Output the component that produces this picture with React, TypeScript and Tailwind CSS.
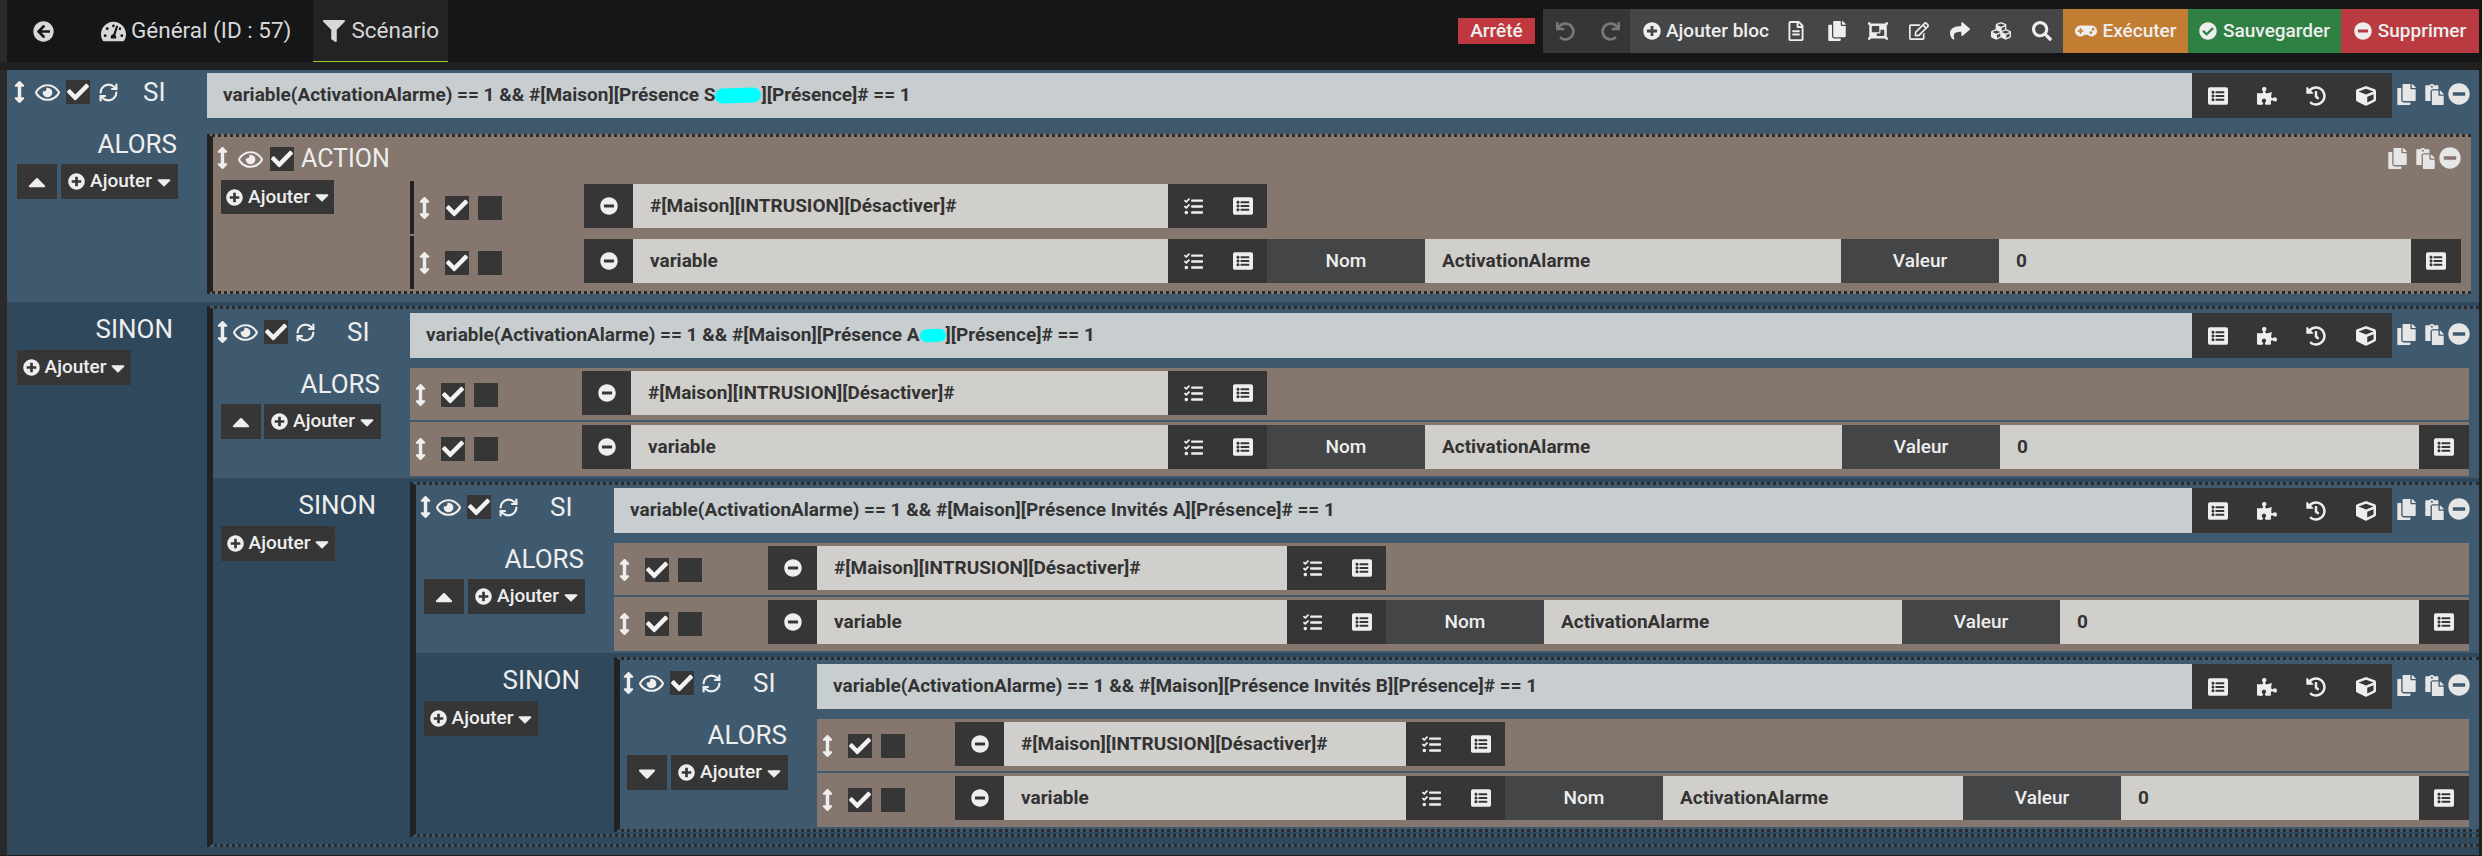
import type { ReactNode } from "react";
import { RefreshCw } from "lucide-react";
import {
  FaArrowCircleLeft, FaArrowsAltV, FaCaretDown, FaCaretUp, FaCheck, FaCheckCircle, FaCopy, FaCube, FaCubes,
  FaFilter, FaGamepad, FaHistory, FaListAlt, FaMinusCircle, FaObjectGroup, FaPaste, FaPlusCircle, FaPuzzlePiece,
  FaRedo, FaRegEdit, FaRegEye, FaRegFileAlt, FaSearch, FaShare, FaTachometerAlt, FaTasks, FaUndo,
} from "react-icons/fa";

// colonnes propres à chaque niveau d'imbrication
const LEVELS = [
  {
    frame: "border-l-[7px] border-l-[#2a2a2a]",
    left: "w-[200px]",
    head: "pl-[7px]",
    eye: "ml-[10px]",
    sync: "ml-[8px]",
    si: "ml-[24px]",
    gutter: "w-[170px]",
    cmd: "w-[535px]",
    name: "w-[416px]",
    leftPad: "pl-[10px]",
    who: "S",
    blob: "w-[46px] h-[15px]",
  },
  {
    frame: "mt-[4px] mb-[8px] border-l-[6px] border-l-[#222] border-y-[3px] border-y-[#2a2a2a] border-dotted [border-left-style:solid] pt-[4px]",
    left: "w-[197px]",
    head: "pl-[4px]",
    eye: "ml-[5px]",
    sync: "ml-[7px]",
    si: "ml-[31px]",
    gutter: "w-[172px]",
    cmd: "w-[537px]",
    name: "w-[417px]",
    leftPad: "pl-[8px]",
    who: "A",
    blob: "w-[26px] h-[13px]",
  },
  {
    frame: "mt-[4px] mb-[7px] border-l-[6px] border-l-[#222] border-y-[3px] border-y-[#2a2a2a] border-dotted [border-left-style:solid] pt-[3px]",
    left: "w-[198px]",
    head: "pl-[4px]",
    eye: "ml-[5px]",
    sync: "ml-[7px]",
    si: "ml-[31px]",
    gutter: "w-[154px]",
    cmd: "w-[470px]",
    name: "w-[358px]",
    leftPad: "pl-[8px]",
    who: "Invités A",
    blob: "",
  },
  {
    frame: "mt-[4px] mb-[2px] border-l-[6px] border-l-[#222] border-y-[3px] border-y-[#2a2a2a] border-dotted [border-left-style:solid] pt-[4px]",
    left: "w-[197px]",
    head: "pl-[3px]",
    eye: "ml-[5px]",
    sync: "ml-[7px]",
    si: "ml-[31px]",
    gutter: "w-[138px]",
    cmd: "w-[402px]",
    name: "w-[300px]",
    leftPad: "pl-[7px]",
    who: "Invités B",
    blob: "",
  },
];

type Level = (typeof LEVELS)[number];

function Check() {
  return (
    <span className="flex h-[24px] w-[24px] shrink-0 items-center justify-center bg-[#363636] text-[#f2f2f2]">
      <FaCheck size={22} />
    </span>
  );
}

function AddButton({ className }: { className: string }) {
  return (
    <button className={`flex items-center justify-center gap-[5px] bg-[#363636] text-[19px] font-medium text-[#eee] ${className}`}>
      <FaPlusCircle size={17} />
      <span>Ajouter</span>
      <FaCaretDown size={22} className="w-[14px]" />
    </button>
  );
}

function CopyIcons({ className }: { className: string }) {
  return (
    <div className={`flex items-center text-[#e6e6e6] ${className}`}>
      <FaCopy size={21} />
      <FaPaste size={21} className="ml-[7px]" />
      <FaMinusCircle size={22} className="ml-[3px]" />
    </div>
  );
}

function TwoButtons() {
  return (
    <div className="flex h-[44px] w-[99px] shrink-0 bg-[#363636] text-[#eee]">
      <span className="flex w-[50px] items-center justify-center"><FaTasks size={19} /></span>
      <span className="flex w-[49px] items-center justify-center"><FaListAlt size={20} /></span>
    </div>
  );
}

function Label({ text }: { text: string }) {
  return (
    <span className="flex h-[44px] w-[158px] shrink-0 items-center justify-center bg-[#444547] text-[19px] font-medium text-[#eee]">
      {text}
    </span>
  );
}

function Field({ className, children }: { className: string; children: ReactNode }) {
  return (
    <span className={`flex h-[44px] items-center bg-[#d1cfcc] pl-[17px] text-[19px] font-bold text-[#333] ${className}`}>
      {children}
    </span>
  );
}

function Handle() {
  return (
    <div className="flex h-[24px] items-center pl-[5px]">
      <FaArrowsAltV size={22} className="w-[11px] text-[#eee]" />
      <span className="ml-[15px]"><Check /></span>
      <span className="ml-[9px] h-[24px] w-[24px] bg-[#363636]" />
    </div>
  );
}

function ActionRow({ c, cmd, bar, height }: { c: Level; cmd?: boolean; bar?: boolean; height: string }) {
  return (
    <div className={`flex items-start pt-[3px] ${height} ${bar ? "border-l-4 border-l-[#222] bg-transparent" : "bg-[#85776e]"}`}>
      <div className={`${c.gutter} shrink-0 pt-[12px]`}>
        <Handle />
      </div>
      <span className="flex h-[44px] w-[49px] shrink-0 items-center justify-center bg-[#363636] text-[#eee]">
        <FaMinusCircle size={18} />
      </span>
      <Field className={`${c.cmd} shrink-0`}>{cmd ? "#[Maison][INTRUSION][Désactiver]#" : "variable"}</Field>
      <TwoButtons />
      {!cmd && (
        <>
          <Label text="Nom" />
          <Field className={`${c.name} shrink-0`}>ActivationAlarme</Field>
          <Label text="Valeur" />
          <Field className="min-w-0 flex-1">0</Field>
          <span className="flex h-[44px] w-[50px] shrink-0 items-center justify-center bg-[#363636] text-[#eee]">
            <FaListAlt size={20} />
          </span>
        </>
      )}
    </div>
  );
}

function ActionBlock({ c }: { c: Level }) {
  return (
    <div className="mb-[8px] mr-[8px] mt-[6px] border-y-[3px] border-l-[6px] border-dotted border-y-[#2a2a2a] border-l-[#222] bg-[#85776e] [border-left-style:solid]">
      <div className="flex h-[43px] items-start pr-[10px] pt-[10px] text-[#eee]">
        <FaArrowsAltV size={22} className="ml-[4px] w-[11px]" />
        <FaRegEye size={25} className="ml-[10px]" />
        <span className="ml-[7px]"><Check /></span>
        <span className="ml-[7px] text-[25px] leading-[24px]">ACTION</span>
        <CopyIcons className="ml-auto" />
      </div>
      <div className="flex pb-[2px]">
        <div className="w-[197px] shrink-0 pl-[8px]">
          <AddButton className="h-[34px] w-[113px]" />
        </div>
        <div className="flex min-w-0 flex-1 flex-col gap-[2px] pr-[10px] pt-[1px]">
          <ActionRow c={c} cmd bar height="h-[53px]" />
          <ActionRow c={c} bar height="h-[53px]" />
        </div>
      </div>
    </div>
  );
}

function SiBlock({ level }: { level: number }) {
  const c = LEVELS[level];
  const text = "variable(ActivationAlarme) == 1 && #[Maison][Présence ";
  return (
    <div className={`bg-[#3f5a6e] ${c.frame}`}>
      {/* SI */}
      <div className={`flex items-start ${level === 0 ? "pt-[3px]" : ""} mb-[10px]`}>
        <div className={`${c.left} ${c.head} mt-[7px] flex h-[24px] shrink-0 items-center text-[#eee]`}>
          <FaArrowsAltV size={22} className="w-[11px]" />
          <FaRegEye size={25} className={c.eye} />
          <span className="ml-[6px]"><Check /></span>
          <RefreshCw size={21} strokeWidth={2.5} className={c.sync} />
          <span className={`${c.si} text-[26px]`}>SI</span>
        </div>
        <div className="flex h-[45px] min-w-0 flex-1 items-center whitespace-pre bg-[#c8cdd0] pl-[16px] text-[19px] font-bold text-[#333]">
          {text}{c.who}
          {c.blob && <span className={`inline-block -rotate-2 rounded-full bg-[#00ffff] ${c.blob}`} />}
          {"][Présence]# == 1"}
        </div>
        <div className="flex h-[45px] w-[200px] shrink-0 bg-[#363636] pl-[1px] text-[#eee]">
          <span className="flex w-[49px] items-center justify-center"><FaListAlt size={20} /></span>
          <span className="flex w-[49px] items-center justify-center"><FaPuzzlePiece size={20} /></span>
          <span className="flex w-[50px] items-center justify-center"><FaHistory size={20} /></span>
          <span className="flex w-[49px] items-center justify-center"><FaCube size={20} /></span>
        </div>
        <CopyIcons className="mt-[10px] w-[87px] shrink-0 pl-[4px]" />
      </div>

      {/* ALORS */}
      <div className={`flex items-start ${level === 0 ? "" : "mb-[2px]"}`}>
        <div className={`${c.left} ${c.leftPad} shrink-0 pr-[29px]`}>
          <div className="h-[36px] pr-[1px] text-right text-[26px] leading-[32px] text-[#eee]">ALORS</div>
          <div className="flex justify-between">
            <span className="flex h-[35px] w-[40px] items-center justify-center bg-[#363636] text-[#eee]">
              {level === 3 ? <FaCaretDown size={28} /> : <FaCaretUp size={28} />}
            </span>
            <AddButton className="h-[35px] w-[117px]" />
          </div>
        </div>
        {level === 0 ? (
          <div className="min-w-0 flex-1">
            <ActionBlock c={c} />
          </div>
        ) : (
          <div className="flex min-w-0 flex-1 flex-col gap-[2px] pr-[10px]">
            <ActionRow c={c} cmd height="h-[52px]" />
            <ActionRow c={c} height="h-[54px]" />
          </div>
        )}
      </div>

      {/* SINON */}
      {level < 3 && (
        <div className="flex items-stretch bg-[#2f485b]">
          <div className={`${c.left} ${c.leftPad} shrink-0 pt-[11px]`}>
            <div className="h-[37px] pr-[34px] text-right text-[26px] leading-[32px] text-[#eee]">SINON</div>
            <AddButton className="h-[35px] w-[114px]" />
          </div>
          <div className="min-w-0 flex-1">
            <SiBlock level={level + 1} />
          </div>
        </div>
      )}
    </div>
  );
}

function HeaderButton({ className, icon, text }: { className: string; icon: ReactNode; text: string }) {
  return (
    <button className={`flex h-[44px] items-center justify-center gap-[6px] text-[19px] font-medium text-[#eee] ${className}`}>
      {icon}
      {text}
    </button>
  );
}

export default function App() {
  return (
    <div className="h-[856px] w-[2482px] overflow-hidden bg-[#202020] font-[Roboto,sans-serif]">
      <header className="flex h-[62px] items-center border-l-[7px] border-l-[#2a2a2a] bg-[#151617] pr-[3px] text-[#d8d8d8]">
        <FaArrowCircleLeft size={21} className="ml-[26px]" />
        <FaTachometerAlt size={25} className="ml-[47px]" />
        <span className="ml-[5px] text-[22.5px]">Général (ID : 57)</span>
        <div className="ml-[22px] flex h-[62px] w-[135px] items-center border-b border-b-[#9acd32] bg-[#232323] pl-[10px]">
          <FaFilter size={22} />
          <span className="ml-[6px] text-[22.5px]">Scénario</span>
        </div>

        <div className="ml-auto flex items-center">
          <span className="mr-[8px] flex h-[26px] w-[77px] items-center justify-center bg-[#c0383f] text-[19px] font-medium text-[#eee]">Arrêté</span>
          <div className="flex h-[44px] w-[87px] items-center gap-[26px] bg-[#353637] pl-[13px] text-[#77787a]">
            <FaUndo size={19} />
            <FaRedo size={19} />
          </div>
          <div className="flex h-[44px] w-[433px] items-center bg-[#454648] pl-[13px] text-[#eee]">
            <FaPlusCircle size={18} />
            <span className="ml-[5px] whitespace-nowrap text-[19px] font-medium">Ajouter bloc</span>
            <div className="ml-[7px] flex">
              <span className="flex w-[41px] justify-center"><FaRegFileAlt size={20} /></span>
              <span className="flex w-[41px] justify-center"><FaCopy size={20} /></span>
              <span className="flex w-[41px] justify-center"><FaObjectGroup size={20} /></span>
              <span className="flex w-[41px] justify-center"><FaRegEdit size={20} /></span>
              <span className="flex w-[41px] justify-center"><FaShare size={20} /></span>
              <span className="flex w-[41px] justify-center"><FaCubes size={20} /></span>
              <span className="flex w-[41px] justify-center"><FaSearch size={20} /></span>
            </div>
          </div>
          <HeaderButton className="w-[125px] bg-[#c27d32]" icon={<FaGamepad size={22} />} text="Exécuter" />
          <HeaderButton className="w-[153px] bg-[#2f8043]" icon={<FaCheckCircle size={18} />} text="Sauvegarder" />
          <HeaderButton className="w-[138px] bg-[#b93a40]" icon={<FaMinusCircle size={18} />} text="Supprimer" />
        </div>
      </header>
      <div className="h-[8px] bg-[#202020]" />
      <main className="w-[2479px]">
        <SiBlock level={0} />
      </main>
    </div>
  );
}
